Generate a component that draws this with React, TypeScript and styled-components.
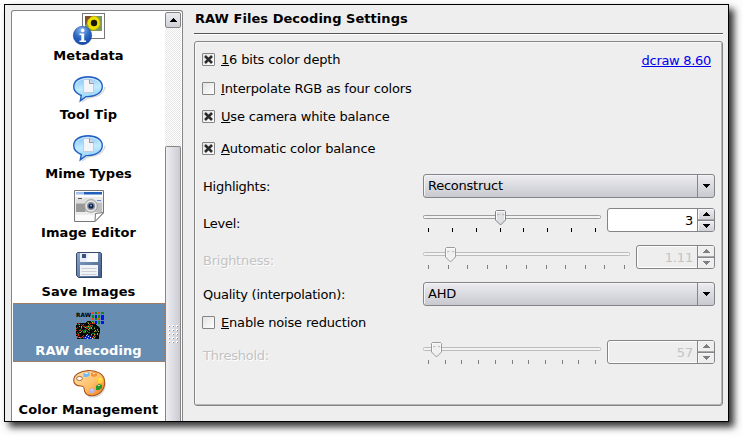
import React from "react";
import styled, { createGlobalStyle, css } from "styled-components";

const GlobalStyle = createGlobalStyle`
  * { box-sizing: border-box; }
  body {
    margin: 0;
    background: #fdfdfd;
    color: #000;
    font: 13px/15px "DejaVu Sans", sans-serif;
    letter-spacing: -0.17px;
    overflow: hidden;
  }
`;

const Desktop = styled.div`
  width: 743px;
  height: 436px;
  padding: 4px 0 0 4px;
  overflow: hidden;
`;

const Dialog = styled.div`
  display: flex;
  width: 725px;
  height: 418px;
  border: 1px solid #000;
  background: #eeeeee;
  box-shadow: 5px 5px 7px rgba(0, 0, 0, 0.8);
`;

const Sidebar = styled.div`
  display: flex;
  width: 172px;
  height: 411px;
  margin: 5px 0 0 6px;
  padding: 1px 1px 0 1px;
  border: 1px solid #858585;
  border-bottom: 0;
  border-radius: 3px 3px 0 0;
  background: #fff;
  overflow: hidden;
`;

const PageList = styled.div`
  width: 152px;
  margin-top: -4px;
`;

const PageItem = styled.div<{ $selected?: boolean }>`
  display: flex;
  flex-direction: column;
  align-items: center;
  height: 59px;
  padding-top: ${(p) => (p.$selected ? 4 : 5)}px;
  border: ${(p) => (p.$selected ? "1px dotted #a07a5e" : "0")};
  background: ${(p) => (p.$selected ? "#678db2" : "transparent")};
  color: ${(p) => (p.$selected ? "#fff" : "#000")};
`;

const PageLabel = styled.span`
  margin: 3px 1px 0 0;
  font-weight: bold;
  letter-spacing: 0.08px;
  white-space: nowrap;
`;

const IconSvg = styled.svg`
  display: block;
  flex: none;
  overflow: visible;
`;

const ScrollBar = styled.div`
  display: flex;
  flex-direction: column;
  width: 16px;
  flex: none;
`;

const ScrollButton = styled.div`
  display: flex;
  align-items: center;
  justify-content: center;
  height: 16px;
  border: 1px solid #858585;
  border-radius: 2px;
  background: linear-gradient(#ececf0, #cfd0d6);
`;

const ScrollTrough = styled.div`
  height: 118px;
  background: repeating-conic-gradient(#e6e6e6 0 25%, #fff 0 50%) 0 0 / 2px 2px;
`;

const ScrollThumb = styled.div`
  flex: 1;
  padding: 178px 0 0 2px;
  border: 1px solid #858585;
  border-bottom: 0;
  border-radius: 2px 2px 0 0;
  background: linear-gradient(90deg, #eeeef2, #cbccd3);
`;

const Grip = styled.svg`
  display: block;
  width: 12px;
  height: 20px;
`;

const Content = styled.main`
  width: 529px;
  margin-left: 11px;
`;

const Title = styled.h1`
  height: 29px;
  margin: 0;
  padding: 6px 0 0 1px;
  border-bottom: 1px solid #555;
  font-size: 13px;
  line-height: 15px;
  letter-spacing: 0.04px;
  box-shadow: 0 1px #fff;
`;

const Group = styled.section`
  height: 365px;
  margin-top: 7px;
  padding: 11px 7px 0 7px;
  border: 1px solid #858585;
  border-radius: 3px;
  box-shadow: inset 1px 1px #f8f8f8, inset -1px -1px #b5b5b5;
`;

const Row = styled.div<{ $gap?: number; $tall?: boolean }>`
  display: flex;
  align-items: center;
  height: ${(p) => (p.$tall ? 24 : 13)}px;
  margin-top: ${(p) => p.$gap ?? 0}px;
`;

const Box = styled.span`
  display: flex;
  width: 13px;
  height: 13px;
  flex: none;
  align-items: center;
  justify-content: center;
  border: 1px solid #858585;
  border-radius: 1px;
  background: linear-gradient(135deg, #e3e3e3, #fff);
`;

const CheckText = styled.span`
  margin-left: 6px;
  white-space: nowrap;
`;

const Mnemonic = styled.span`
  text-decoration: underline;
  text-underline-offset: 1px;
  text-decoration-thickness: 1px;
  text-decoration-skip-ink: none;
`;

const Link = styled.a`
  margin: 2px 4px 0 auto;
  color: #0000ee;
  text-decoration: underline;
  text-underline-offset: 1px;
  text-decoration-thickness: 1px;
  letter-spacing: -0.3px;
`;

const FieldLabel = styled.span<{ $low?: boolean; $disabled?: boolean }>`
  width: 220px;
  flex: none;
  padding: ${(p) => (p.$low ? 6 : 0)}px 0 0 1px;
  letter-spacing: -0.25px;
  ${(p) => p.$disabled && css`color: #c3c3c3; text-shadow: 1px 1px #fff;`}
`;

const Combo = styled.div`
  display: flex;
  width: 292px;
  height: 24px;
  margin-left: 1px;
  border: 1px solid #858589;
  border-radius: 3px;
  background: linear-gradient(#ececf1, #dadbe0 50%, #c9cad0);
  box-shadow: inset 1px 1px #f4f4f7;
`;

const ComboValue = styled.span`
  flex: 1;
  padding: 3px 0 0 4px;
  letter-spacing: -0.25px;
`;

const ComboArrow = styled.span`
  display: flex;
  width: 17px;
  align-items: center;
  justify-content: center;
  border-left: 1px solid #858589;
`;

const Slider = styled.svg`
  display: block;
  flex: none;
  height: 24px;
  margin-left: 1px;
`;

const Spin = styled.div<{ $disabled?: boolean }>`
  display: flex;
  flex: 1;
  height: 24px;
  margin-left: 6px;
  border: 1px solid #858589;
  border-radius: 3px;
  background: ${(p) => (p.$disabled ? "#eeeeee" : "#fff")};
  color: ${(p) => (p.$disabled ? "#c3c3c3" : "#000")};
  overflow: hidden;
  ${(p) => p.$disabled && css`box-shadow: inset 0 0 0 1px #fff;`}
`;

const SpinValue = styled.span`
  flex: 1;
  padding: 4px 4px 0 0;
  text-align: right;
`;

const SpinButtons = styled.span`
  display: grid;
  grid-template-rows: 11px 11px;
  width: 17px;
  border-left: 1px solid #858589;
`;

const SpinButton = styled.span<{ $disabled?: boolean }>`
  display: flex;
  align-items: center;
  justify-content: center;
  background: ${(p) => (p.$disabled ? "#eeeeee" : "linear-gradient(#ececf0, #d0d1d7)")};
  box-shadow: inset 1px 1px #f6f6f6;

  & + & { border-top: 1px solid #858589; }
  &:first-child { border-bottom: 1px solid #aaa; }
`;

function Arrow({ up, color = "#000" }: { up?: boolean; color?: string }) {
  return (
    <IconSvg width="7" height="4" viewBox="0 0 7 4" shapeRendering="crispEdges">
      <path
        fill={color}
        d={up ? "M3 0h1v1h1v1h1v1h1v1H0V3h1V2h1V1h1z" : "M0 0h7v1H6v1H5v1H4v1H3V3H2V2H1V1H0z"}
      />
    </IconSvg>
  );
}

function CheckBox({ checked, label }: { checked?: boolean; label: string }) {
  return (
    <>
      <Box>
        {checked && (
          <IconSvg width="9" height="9" viewBox="0 0 9 9">
            <path d="M1 1l7 7M8 1l-7 7" stroke="#2c2c2c" strokeWidth="2.6" />
          </IconSvg>
        )}
      </Box>
      <CheckText>
        <Mnemonic>{label[0]}</Mnemonic>
        {label.slice(1)}
      </CheckText>
    </>
  );
}

interface RangeProps {
  width: number;
  ticks: number;
  handle: number;
  disabled?: boolean;
}

function Range({ width, ticks, handle, disabled }: RangeProps) {
  const step = (width - 11) / (ticks - 1);
  const edge = disabled ? "#bcbcbc" : "#9d9d9d";
  return (
    <Slider width={width} height="24" viewBox={`0 0 ${width} 24`}>
      <rect x="0.5" y="7.5" width={width - 1} height="3" rx="1" fill="#f3f3f3" stroke={edge} />
      {Array.from({ length: ticks }, (_, i) => (
        <rect
          key={i}
          x={Math.round(5 + i * step)}
          y="20"
          width="1"
          height="4"
          fill={disabled ? "#7e7e7e" : "#000"}
        />
      ))}
      <path
        d={`M${handle + 1.5} 2.5h8l1 1v8.5l-5 5-5-5v-8.5z`}
        fill={disabled ? "#f0f0f0" : "#dfe0e4"}
        stroke={disabled ? "#9b9b9b" : "#838387"}
      />
      <path d={`M${handle + 1.5} 12V3.5h8V12`} fill="none" stroke="#fafafa" />
      <path
        d={`M${handle + 2.5} 7.5v-1h2M${handle + 7} 6.5h2v1`}
        fill="none"
        stroke="#aaaaad"
        strokeWidth="0.7"
      />
    </Slider>
  );
}

function Spinner({ value, disabled }: { value: string; disabled?: boolean }) {
  const color = disabled ? "#7e7e7e" : "#000";
  return (
    <Spin $disabled={disabled}>
      <SpinValue>{value}</SpinValue>
      <SpinButtons>
        <SpinButton $disabled={disabled}><Arrow up color={color} /></SpinButton>
        <SpinButton $disabled={disabled}><Arrow color={color} /></SpinButton>
      </SpinButtons>
    </Spin>
  );
}

function ComboBox({ value }: { value: string }) {
  return (
    <Combo>
      <ComboValue>{value}</ComboValue>
      <ComboArrow><Arrow /></ComboArrow>
    </Combo>
  );
}

function ThumbGrip() {
  return (
    <Grip viewBox="0 0 12 20" shapeRendering="crispEdges">
      {[0, 1, 2, 3, 4].flatMap((row) =>
        [0, 1, 2].map((col) => (
          <React.Fragment key={`${row}-${col}`}>
            <rect x={col * 4} y={row * 4} width="2" height="2" fill="#fff" />
            <rect x={col * 4 + 1} y={row * 4 + 1} width="1" height="1" fill="#909095" />
          </React.Fragment>
        )),
      )}
    </Grip>
  );
}

function MetadataIcon() {
  return (
    <IconSvg width="32" height="32" viewBox="0 0 32 32">
      <defs>
        <radialGradient id="info" cx="0.45" cy="0.2" r="0.9">
          <stop offset="0" stopColor="#8db8ee" />
          <stop offset="0.5" stopColor="#2c66c0" />
          <stop offset="1" stopColor="#0c3f9c" />
        </radialGradient>
      </defs>
      <rect x="9.5" y="0.5" width="22" height="25" fill="#fff" stroke="#777" />
      <rect x="12" y="3" width="17" height="15" fill="#7b9a62" />
      <path d="M12 3h7l-3 6-4 3z" fill="#80502c" />
      <path
        d="M18 4l3-1 3 1 2 2 1 3v3l-2 3-3 2h-3l-3-2-1-2-1-3 1-3z"
        fill="#eedf00"
        stroke="#b5a400"
        strokeWidth="0.6"
      />
      <circle cx="21" cy="10" r="3.2" fill="#17140a" />
      <circle cx="9.5" cy="22.5" r="9.2" fill="url(#info)" stroke="#174a9e" strokeWidth="0.6" />
      <circle cx="9.7" cy="17.4" r="1.8" fill="#fff" />
      <path d="M6.5 20.5h4.7v7h1.8v1.6H6.5v-1.6h1.8v-5.4H6.5z" fill="#fff" />
    </IconSvg>
  );
}

function BubbleIcon() {
  return (
    <IconSvg width="32" height="32" viewBox="0 0 32 32">
      <defs>
        <linearGradient id="bubble" x1="0" y1="0" x2="0.2" y2="1">
          <stop offset="0" stopColor="#79bdf4" />
          <stop offset="0.55" stopColor="#c3ebff" />
          <stop offset="1" stopColor="#8bd0fb" />
        </linearGradient>
      </defs>
      <path d="M9 30l6-4c10-1 16-5 17-11" fill="none" stroke="#bbb" strokeWidth="1.4" opacity="0.6" />
      <path
        d="M15 4.7c8 0 14.3 4 14.3 9.8S23 24.6 15 24.6h-2l-5.7 4.2 1-5.3C3.6 21.7.7 18.6.7 14.5.7 8.7 7 4.7 15 4.7z"
        fill="url(#bubble)"
        stroke="#245fbd"
        strokeWidth="1.4"
      />
      <path d="M3.5 12c1-3.500 6-5.500 11.500-5.500S25 8 27 12" fill="none" stroke="#d9f1ff" opacity="0.8" />
      <path d="M10.5 7.500h6l4 4v9h-10z" fill="#f4f5fa" stroke="#bfc4d4" strokeWidth="0.8" />
      <path d="M16.5 7.500v4h4" fill="#ddd" stroke="#777f91" strokeWidth="0.8" />
    </IconSvg>
  );
}

function ImageEditorIcon() {
  return (
    <IconSvg width="32" height="32" viewBox="0 0 32 32">
      <path d="M1.5.5h29v22.500l-8.500 8.500H1.500z" fill="#fbfbfb" stroke="#777" />
      <rect x="3" y="2" width="8" height="2.5" fill="#9ebdec" />
      <rect x="11" y="2" width="18" height="2.5" fill="#235fb9" />
      <path d="M2 7h28v15l-5 3H2z" fill="#ececec" />
      <path d="M3 10h26v12H3z" fill="#bfbfc0" />
      <path d="M3 9h8l1-1h8l2 2h7v3H3z" fill="#dedede" />
      <path d="M3 14h9v8H3z" fill="#999" />
      <path d="M5 8h4v1H5z" fill="#555" />
      <path d="M24 10h4v1h-4z" fill="#5f8fd8" />
      <circle cx="18" cy="16" r="6.3" fill="#e4e4e4" stroke="#9b9b9b" />
      <circle cx="18" cy="16" r="4" fill="#8a919e" />
      <circle cx="18" cy="16" r="2.6" fill="#14233f" />
      <circle cx="18" cy="15.6" r="1.1" fill="#5b98e8" />
      <path d="M30.5 22.500l-8 1-.5 8z" fill="#fff" stroke="#777" />
    </IconSvg>
  );
}

function SaveIcon() {
  return (
    <IconSvg width="32" height="32" viewBox="0 0 32 32">
      <defs>
        <linearGradient id="disk" x1="0" y1="0" x2="1" y2="1">
          <stop offset="0" stopColor="#8da6c8" />
          <stop offset="1" stopColor="#405c88" />
        </linearGradient>
      </defs>
      <path d="M4.5 3.500h23l1 1v24h-23l-2-2v-22z" fill="url(#disk)" stroke="#35496a" />
      <path d="M7 4h18v9H7z" fill="#e8edf5" />
      <path d="M16 4h9v9H13z" fill="#fff" opacity="0.7" />
      <rect x="9" y="5" width="4" height="4" fill="#35517d" />
      <rect x="7" y="16" width="18" height="11" fill="#f1f2f5" />
      <path d="M8.5 19.500h15M8.500 22.500h15M8.500 25.500h15" stroke="#c8cdd6" />
    </IconSvg>
  );
}

const CAMERA_ROWS: [number, number][] = [
  [14, 18], [13, 21], [4, 22], [4, 23], [3, 24], [3, 26], [3, 27], [3, 27], [3, 27],
  [3, 27], [3, 27], [3, 27], [3, 27], [3, 27], [3, 26], [4, 26], [4, 26], [4, 26],
];
const SENSOR = ["#050505", "#050505", "#0a0a0a", "#208022", "#050505", "#c82f18", "#111", "#b8a928", "#000", "#157032", "#070707"];
const BAYER = ["rgrg", "gbgb", "rgrb", "gbgb"];
const BAYER_COLORS: Record<string, string> = { r: "#f0441f", g: "#078e12", b: "#0014e8" };

function sensorColor(x: number, y: number) {
  const n = Math.sin(x * 12.9898 + y * 78.233) * 43758.5453;
  return SENSOR[Math.floor((n - Math.floor(n)) * SENSOR.length)];
}

function RawIcon() {
  return (
    <IconSvg width="32" height="32" viewBox="0 0 32 32" shapeRendering="crispEdges">
      <text
        x="3"
        y="9"
        textLength="15"
        lengthAdjust="spacingAndGlyphs"
        fontSize="6"
        fontWeight="bold"
        letterSpacing="0"
        fontFamily="DejaVu Sans, sans-serif"
      >
        RAW
      </text>
      {BAYER.map((line, y) =>
        [...line].map((c, x) => (
          <rect key={`${x}-${y}`} x={19 + x * 3} y={4 + y * 3} width={x === 3 ? 3 : 2} height={y % 2 ? 3 : 2} fill={BAYER_COLORS[c]} />
        )),
      )}
      {CAMERA_ROWS.map(([from, to], y) =>
        Array.from({ length: to - from }, (_, i) => {
          const x = from + i;
          const spread = y - 12;
          const lens = y > 13 && Math.abs(x - 14.5) < spread + 0.5;
          const blue = (x * 2 + y) % 5 ? "#0920c6" : "#c6d6fb";
          return <rect key={`c${x}-${y}`} x={x} y={13 + y} width="1" height="1" fill={lens ? blue : sensorColor(x, y)} />;
        }),
      )}
    </IconSvg>
  );
}

function PaletteIcon() {
  return (
    <IconSvg width="32" height="32" viewBox="0 0 32 32">
      <defs>
        <linearGradient id="palette" x1="0" y1="0" x2="1" y2="1">
          <stop offset="0.1" stopColor="#ffdba1" />
          <stop offset="0.55" stopColor="#ffc16a" />
          <stop offset="1" stopColor="#f07812" />
        </linearGradient>
      </defs>
      <path d="M15 29c10 3 17-3 17-13" fill="none" stroke="#bbb" strokeWidth="1.5" opacity="0.6" />
      <path
        d="M15 3.600C7 4 1 8 .7 13c-.2 4 3 6 7 6 4.500 0 3 3 4 5.500 1 2.700 3.500 4.200 7 4.200 7.500 0 13-6 13-13.500C31.700 7 24 3.100 15 3.600z"
        fill="url(#palette)"
        stroke="#a95420"
        strokeWidth="1.1"
      />
      <ellipse cx="6.5" cy="11.5" rx="2.9" ry="2" fill="#fff" stroke="#a66534" />
      <path d="M10.5 6h3l3-1v4l-3 1h-3z" fill="#76b8ef" />
      <path d="M18 6l3-1 3 1v3l-3 1-3-1z" fill="#f39237" />
      <path d="M25 11l3-1 2 2-1 4h-4z" fill="#ffd832" />
      <path d="M23 19l3-2 3 1v3l-3 2h-3z" fill="#28942b" />
      <path d="M17 22l3-1 2 2-1 3h-4z" fill="#b9b1ed" />
      <path d="M12 6.500h3M20 6.500h2M26 12h2M25 18.500h2M18 23h2" stroke="#fff" opacity="0.7" />
    </IconSvg>
  );
}

const PAGES = [
  { label: "Metadata", icon: MetadataIcon },
  { label: "Tool Tip", icon: BubbleIcon },
  { label: "Mime Types", icon: BubbleIcon },
  { label: "Image Editor", icon: ImageEditorIcon },
  { label: "Save Images", icon: SaveIcon },
  { label: "RAW decoding", icon: RawIcon, selected: true },
  { label: "Color Management", icon: PaletteIcon },
];

export default function App() {
  return (
    <Desktop>
      <GlobalStyle />
      <Dialog>
        <Sidebar>
          <PageList>
            {PAGES.map(({ label, icon: Icon, selected }) => (
              <PageItem key={label} $selected={selected}>
                <Icon />
                <PageLabel>{label}</PageLabel>
              </PageItem>
            ))}
          </PageList>
          <ScrollBar>
            <ScrollButton><Arrow up /></ScrollButton>
            <ScrollTrough />
            <ScrollThumb><ThumbGrip /></ScrollThumb>
          </ScrollBar>
        </Sidebar>
        <Content>
          <Title>RAW Files Decoding Settings</Title>
          <Group>
            <Row>
              <CheckBox checked label="16 bits color depth" />
              <Link>dcraw 8.60</Link>
            </Row>
            <Row $gap={16}><CheckBox label="Interpolate RGB as four colors" /></Row>
            <Row $gap={15}><CheckBox checked label="Use camera white balance" /></Row>
            <Row $gap={19}><CheckBox checked label="Automatic color balance" /></Row>
            <Row $tall $gap={19}>
              <FieldLabel>Highlights:</FieldLabel>
              <ComboBox value="Reconstruct" />
            </Row>
            <Row $tall $gap={10}>
              <FieldLabel $low>Level:</FieldLabel>
              <Range width={178} ticks={8} handle={72} />
              <Spinner value="3" />
            </Row>
            <Row $tall $gap={13}>
              <FieldLabel $low $disabled>Brightness:</FieldLabel>
              <Range width={207} ticks={11} handle={22} disabled />
              <Spinner value="1.11" disabled />
            </Row>
            <Row $tall $gap={13}>
              <FieldLabel>Quality (interpolation):</FieldLabel>
              <ComboBox value="AHD" />
            </Row>
            <Row $gap={10}><CheckBox label="Enable noise reduction" /></Row>
            <Row $tall $gap={11}>
              <FieldLabel $low $disabled>Threshold:</FieldLabel>
              <Range width={178} ticks={11} handle={8} disabled />
              <Spinner value="57" disabled />
            </Row>
          </Group>
        </Content>
      </Dialog>
    </Desktop>
  );
}
